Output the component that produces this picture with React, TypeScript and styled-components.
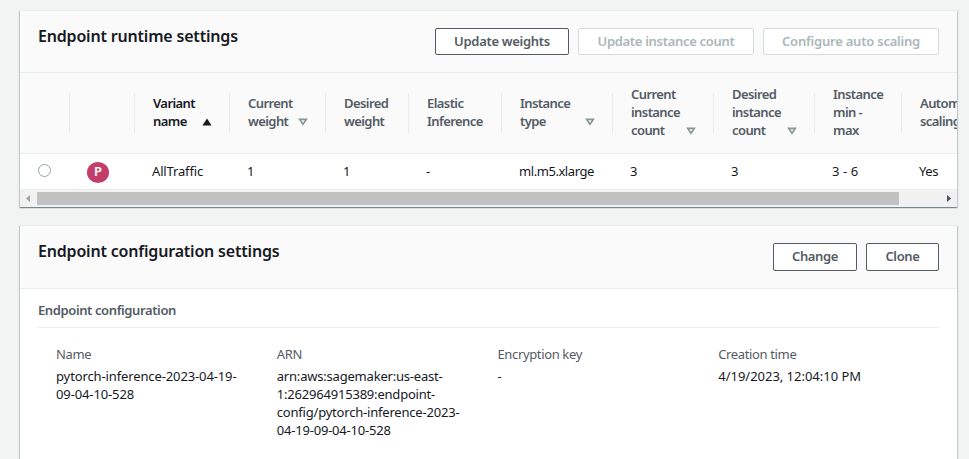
import React from 'react';
import styled, { createGlobalStyle } from 'styled-components';

const GlobalStyle = createGlobalStyle`
  *, *::before, *::after { box-sizing: border-box; }
  body {
    margin: 0;
    height: 459px;
    overflow: hidden;
    background: #f2f4f4;
    color: #16191f;
    font: 400 13px/18px "Noto Sans", "Open Sans", sans-serif;
  }
`;

const Page = styled.main`
  display: flex;
  flex-direction: column;
  gap: 18px;
  height: 459px;
  padding: 10px 12px 0 20px;
  overflow: hidden;
`;

const Panel = styled.section<{ $fill?: boolean }>`
  flex: ${p => (p.$fill ? '0 0 260px' : 'none')};
  background: #fff;
  border-top: 1px solid #eaeded;
  box-shadow:
    0 1px 1px 0 rgba(0, 28, 36, 0.3),
    1px 1px 1px 0 rgba(0, 28, 36, 0.15),
    -1px 1px 1px 0 rgba(0, 28, 36, 0.15);
`;

const PanelHeader = styled.header<{ $height: number }>`
  display: flex;
  justify-content: space-between;
  align-items: flex-start;
  height: ${p => p.$height}px;
  padding: 0 18px;
  background: #fafafa;
  border-bottom: 1px solid #eaeded;
`;

const PanelTitle = styled.h2`
  margin: 15px 0 0;
  font-size: 16px;
  font-weight: 600;
  line-height: 20px;
  letter-spacing: -0.19px;
  white-space: nowrap;
`;

const Actions = styled.div`
  display: flex;
  gap: 9px;
  margin-top: 17px;
`;

const Button = styled.button<{ $width: number; $height: number; $track: number }>`
  width: ${p => p.$width}px;
  height: ${p => p.$height}px;
  padding: 0 0 ${p => (p.$height > 27 ? 2 : 1)}px;
  border: 1px solid #545b64;
  border-radius: 2px;
  background: #fff;
  color: #545b64;
  font: 600 13px/18px "Noto Sans", "Open Sans", sans-serif;
  letter-spacing: ${p => p.$track}px;
  white-space: nowrap;

  &:disabled {
    border-color: #d5dbdb;
    color: #aab7b8;
  }
`;

const TableViewport = styled.div`
  overflow: hidden;
`;

const TableRow = styled.div`
  display: grid;
  grid-template-columns: 50px 65px 95px 96px 83px 93px 111px 101px 101px 87px 98px;
  width: 980px;
`;

const HeadRow = styled(TableRow)`
  align-items: center;
  height: 81px;
  background: #fafafa;
  border-bottom: 1px solid #eaeded;
`;

const BodyRow = styled(TableRow)`
  height: 36px;
  border-bottom: 1px solid #eaeded;
`;

const HeadCell = styled.div`
  display: flex;
  align-items: center;
  height: 40px;
  padding: 0 0 2px 18px;
  border-right: 1px solid #eaeded;
`;

const HeadContent = styled.div<{ $active?: boolean }>`
  display: flex;
  flex: 1;
  justify-content: space-between;
  align-items: flex-end;
  padding-right: 17px;
  color: ${p => (p.$active ? '#16191f' : '#545b64')};
  font-weight: 600;
  letter-spacing: -0.58px;
  white-space: nowrap;
`;

const Line = styled.span`
  display: block;
`;

const SortIcon = styled.svg`
  flex: none;
  width: 10px;
  height: 8px;
  margin-bottom: 4px;
`;

const Cell = styled.div<{ $track?: number }>`
  padding: 8px 0 0 17px;
  letter-spacing: ${p => p.$track ?? -0.15}px;
  white-space: nowrap;
`;

const RadioCell = styled.div`
  padding: 10px 0 0 18px;
`;

const Radio = styled.div`
  width: 13px;
  height: 13px;
  border: 1px solid #95a5a6;
  border-radius: 50%;
  background: #fff;
`;

const BadgeCell = styled.div`
  padding: 8px 0 0 17px;
`;

const Badge = styled.div`
  display: flex;
  justify-content: center;
  width: 22px;
  height: 21px;
  border-radius: 50%;
  background: #c33d69;
  color: #fff;
  font-size: 13px;
  font-weight: 600;
  line-height: 19px;
`;

const Scrollbar = styled.div`
  display: flex;
  align-items: center;
  height: 17px;
  background: #f1f1f1;
`;

const ScrollArrow = styled.svg`
  flex: none;
  width: 17px;
  height: 17px;
`;

const ScrollTrack = styled.div`
  flex: 1;
`;

const ScrollThumb = styled.div`
  width: 862px;
  height: 13px;
  background: #c1c1c1;
`;

const PanelBody = styled.div`
  padding: 12px 18px 0;
`;

const SectionTitle = styled.h3`
  margin: 0;
  height: 27px;
  border-bottom: 1px solid #eaeded;
  color: #545b64;
  font-size: 13px;
  font-weight: 600;
  line-height: 18px;
  letter-spacing: -0.39px;
`;

const Fields = styled.dl`
  display: grid;
  grid-template-columns: repeat(4, 1fr);
  margin: 17px 0 0;
  padding-left: 18px;
`;

const FieldLabel = styled.dt`
  color: #545b64;
  letter-spacing: -0.36px;
`;

const FieldValue = styled.dd<{ $track: number }>`
  margin: 4px 0 0;
  letter-spacing: ${p => p.$track}px;
  white-space: nowrap;
`;

type Sort = 'asc' | 'none';

const columns: { lines: string[]; sort?: Sort }[] = [
  { lines: ['Variant', 'name'], sort: 'asc' },
  { lines: ['Current', 'weight'], sort: 'none' },
  { lines: ['Desired', 'weight'] },
  { lines: ['Elastic', 'Inference'] },
  { lines: ['Instance', 'type'], sort: 'none' },
  { lines: ['Current', 'instance', 'count'], sort: 'none' },
  { lines: ['Desired', 'instance', 'count'], sort: 'none' },
  { lines: ['Instance', 'min -', 'max'] },
  { lines: ['Automatic', 'scaling'] },
];

const cells: { text: string; track?: number }[] = [
  { text: 'AllTraffic' },
  { text: '1' },
  { text: '1' },
  { text: '-' },
  { text: 'ml.m5.xlarge', track: -0.44 },
  { text: '3' },
  { text: '3' },
  { text: '3 - 6', track: 0.1 },
  { text: 'Yes', track: -0.35 },
];

const fields = [
  { label: 'Name', lines: ['pytorch-inference-2023-04-19-', '09-04-10-528'], track: -0.12 },
  {
    label: 'ARN',
    lines: ['arn:aws:sagemaker:us-east-', '1:262964915389:endpoint-', 'config/pytorch-inference-2023-', '04-19-09-04-10-528'],
    track: -0.2,
  },
  { label: 'Encryption key', lines: ['-'], track: 0 },
  { label: 'Creation time', lines: ['4/19/2023, 12:04:10 PM'], track: -0.02 },
];

function SortMark({ sort }: { sort: Sort }) {
  return (
    <SortIcon viewBox="0 0 10 8">
      {sort === 'asc' ? (
        <path d="M5 0.4 9.6 7.6H0.4Z" fill="#16191f" />
      ) : (
        <path d="M1.7 1.4H8.3L5 6.3Z" fill="none" stroke="#879596" strokeWidth="1.7" />
      )}
    </SortIcon>
  );
}

export default function App() {
  return (
    <>
      <GlobalStyle />
      <Page>
        <Panel>
          <PanelHeader $height={62}>
            <PanelTitle>Endpoint runtime settings</PanelTitle>
            <Actions>
              <Button $width={134} $height={27} $track={-0.3}>Update weights</Button>
              <Button $width={176} $height={27} $track={-0.3} disabled>Update instance count</Button>
              <Button $width={176} $height={27} $track={-0.22} disabled>Configure auto scaling</Button>
            </Actions>
          </PanelHeader>
          <TableViewport>
            <HeadRow>
              <HeadCell />
              <HeadCell />
              {columns.map((col, i) => (
                <HeadCell key={i}>
                  <HeadContent $active={col.sort === 'asc'}>
                    <div>{col.lines.map(l => <Line key={l}>{l}</Line>)}</div>
                    {col.sort && <SortMark sort={col.sort} />}
                  </HeadContent>
                </HeadCell>
              ))}
            </HeadRow>
            <BodyRow>
              <RadioCell><Radio role="radio" aria-checked="false" /></RadioCell>
              <BadgeCell><Badge>P</Badge></BadgeCell>
              {cells.map((c, i) => <Cell key={i} $track={c.track}>{c.text}</Cell>)}
            </BodyRow>
          </TableViewport>
          <Scrollbar>
            <ScrollArrow viewBox="0 0 17 17"><path d="M10 5v7L6 8.5Z" fill="#a3a3a3" /></ScrollArrow>
            <ScrollTrack><ScrollThumb /></ScrollTrack>
            <ScrollArrow viewBox="0 0 17 17"><path d="M7 5v7l4-3.5Z" fill="#505050" /></ScrollArrow>
          </Scrollbar>
        </Panel>

        <Panel $fill>
          <PanelHeader $height={63}>
            <PanelTitle>Endpoint configuration settings</PanelTitle>
            <Actions>
              <Button $width={84} $height={28} $track={-0.4}>Change</Button>
              <Button $width={73} $height={28} $track={-0.35}>Clone</Button>
            </Actions>
          </PanelHeader>
          <PanelBody>
            <SectionTitle>Endpoint configuration</SectionTitle>
            <Fields>
              {fields.map(f => (
                <div key={f.label}>
                  <FieldLabel>{f.label}</FieldLabel>
                  <FieldValue $track={f.track}>
                    {f.lines.map(l => <Line key={l}>{l}</Line>)}
                  </FieldValue>
                </div>
              ))}
            </Fields>
          </PanelBody>
        </Panel>
      </Page>
    </>
  );
}
